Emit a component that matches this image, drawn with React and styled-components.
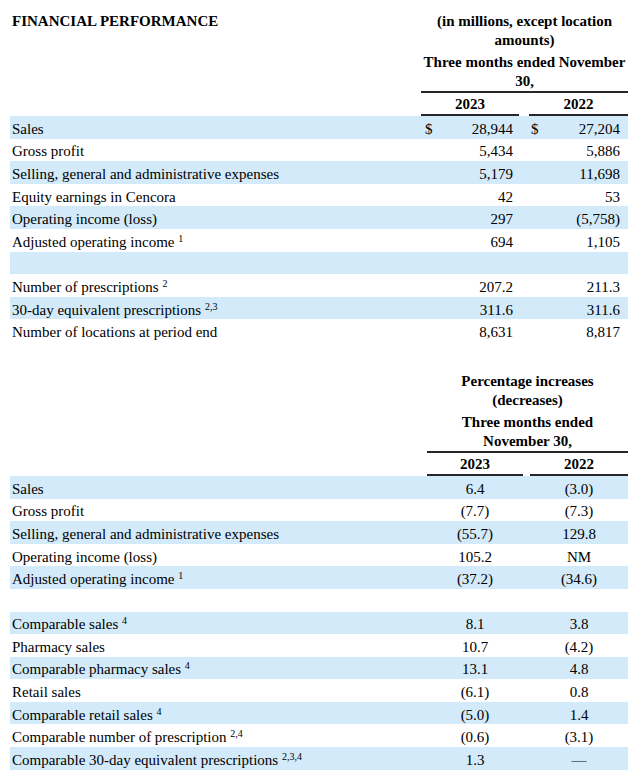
import React from 'react';
import styled, { createGlobalStyle } from 'styled-components';

const GlobalStyle = createGlobalStyle`
  html, body { margin: 0; padding: 0; background: #fff; }
  body {
    font-family: "Liberation Serif", "Times New Roman", serif;
    color: #000;
    font-size: 15px;
  }
`;

const BAND = '#d3eafa';
const RULE = '#262626';

const Page = styled.main`
  width: 640px;
  box-sizing: border-box;
  padding: 12px 12px 0 10px;
`;

const Section = styled.section`
  display: flex;
  flex-direction: column;
  width: 618px;
  & + & { margin-top: 30px; }
`;

const Grid = styled.div`
  display: grid;
  grid-template-columns: ${p => p.$cols};
  align-items: center;
`;

const HeadRow = styled(Grid)`
  align-items: start;
`;

const Title = styled.h2`
  margin: 0;
  padding-left: 2px;
  font-size: 15px;
  font-weight: bold;
  line-height: 19px;
`;

const Caption = styled.div`
  grid-column: 2 / 5;
  border-bottom: 2px solid ${RULE};
  text-align: center;
  font-weight: bold;
  line-height: 19px;
  white-space: nowrap;
`;

const CaptionPart = styled.p`
  margin: 0;
  & + & { margin-top: 3px; }
`;

const Year = styled.div`
  grid-column: ${p => p.$col};
  padding-top: 2px;
  border-bottom: 2px solid ${RULE};
  text-align: center;
  font-weight: bold;
  line-height: 19px;
`;

const Row = styled(Grid)`
  box-sizing: border-box;
  height: 22.6px;
  padding-top: 3px;
  background: ${p => (p.$shaded ? BAND : 'transparent')};
  line-height: 18px;
`;

const Label = styled.div`
  padding-left: 2px;
  white-space: nowrap;
`;

const Sup = styled.sup`
  font-size: 10px;
  line-height: 0;
  vertical-align: 5px;
`;

const MoneyCell = styled.div`
  grid-column: ${p => p.$col};
  display: flex;
  justify-content: space-between;
  padding: 0 ${p => p.$pr}px 0 ${p => p.$pl}px;
`;

const PctCell = styled.div`
  grid-column: ${p => p.$col};
  text-align: center;
`;

const COLS1 = '411px 98px 10px 99px';
const COLS2 = '417px 96px 7px 98px';

const table1 = [
  { label: 'Sales', a: '28,944', b: '27,204', dollar: true },
  { label: 'Gross profit', a: '5,434', b: '5,886' },
  { label: 'Selling, general and administrative expenses', a: '5,179', b: '11,698' },
  { label: 'Equity earnings in Cencora', a: '42', b: '53' },
  { label: 'Operating income (loss)', a: '297', b: '(5,758)' },
  { label: 'Adjusted operating income', sup: '1', a: '694', b: '1,105' },
  { label: '', a: '', b: '' },
  { label: 'Number of prescriptions', sup: '2', a: '207.2', b: '211.3' },
  { label: '30-day equivalent prescriptions', sup: '2,3', a: '311.6', b: '311.6' },
  { label: 'Number of locations at period end', a: '8,631', b: '8,817' },
];

const table2 = [
  { label: 'Sales', a: '6.4', b: '(3.0)' },
  { label: 'Gross profit', a: '(7.7)', b: '(7.3)' },
  { label: 'Selling, general and administrative expenses', a: '(55.7)', b: '129.8' },
  { label: 'Operating income (loss)', a: '105.2', b: 'NM' },
  { label: 'Adjusted operating income', sup: '1', a: '(37.2)', b: '(34.6)' },
  { label: '', a: '', b: '' },
  { label: 'Comparable sales', sup: '4', a: '8.1', b: '3.8' },
  { label: 'Pharmacy sales', a: '10.7', b: '(4.2)' },
  { label: 'Comparable pharmacy sales', sup: '4', a: '13.1', b: '4.8' },
  { label: 'Retail sales', a: '(6.1)', b: '0.8' },
  { label: 'Comparable retail sales', sup: '4', a: '(5.0)', b: '1.4' },
  { label: 'Comparable number of prescription', sup: '2,4', a: '(0.6)', b: '(3.1)' },
  { label: 'Comparable 30-day equivalent prescriptions', sup: '2,3,4', a: '1.3', b: '\u2014' },
];

function RowLabel({ row }) {
  return (
    <Label>
      {row.label || '\u00a0'}
      {row.sup && (
        <>
          {' '}
          <Sup>{row.sup}</Sup>
        </>
      )}
    </Label>
  );
}

function Header({ cols, title, parts }) {
  return (
    <>
      <HeadRow $cols={cols}>
        <Title>{title}</Title>
        <Caption>
          {parts.map((lines, i) => (
            <CaptionPart key={i}>
              {lines.map((l, j) => (
                <React.Fragment key={j}>
                  {j > 0 && <br />}
                  {l}
                </React.Fragment>
              ))}
            </CaptionPart>
          ))}
        </Caption>
      </HeadRow>
      <HeadRow $cols={cols}>
        <Year $col={2}>2023</Year>
        <Year $col={4}>2022</Year>
      </HeadRow>
    </>
  );
}

export default function App() {
  return (
    <>
      <GlobalStyle />
      <Page>
        <Section>
          <Header
            cols={COLS1}
            title="FINANCIAL PERFORMANCE"
            parts={[
              ['(in millions, except location', 'amounts)'],
              ['Three months ended November', '30,'],
            ]}
          />
          {table1.map((r, i) => (
            <Row key={i} $cols={COLS1} $shaded={i % 2 === 0}>
              <RowLabel row={r} />
              <MoneyCell $col={2} $pl={4} $pr={6}>
                <span>{r.dollar ? '$' : ''}</span>
                <span>{r.a}</span>
              </MoneyCell>
              <MoneyCell $col={4} $pl={2} $pr={8}>
                <span>{r.dollar ? '$' : ''}</span>
                <span>{r.b}</span>
              </MoneyCell>
            </Row>
          ))}
        </Section>
        <Section>
          <Header
            cols={COLS2}
            title=""
            parts={[
              ['Percentage increases', '(decreases)'],
              ['Three months ended', 'November 30,'],
            ]}
          />
          {table2.map((r, i) => (
            <Row key={i} $cols={COLS2} $shaded={i % 2 === 0}>
              <RowLabel row={r} />
              <PctCell $col={2}>{r.a}</PctCell>
              <PctCell $col={4}>{r.b}</PctCell>
            </Row>
          ))}
        </Section>
      </Page>
    </>
  );
}
